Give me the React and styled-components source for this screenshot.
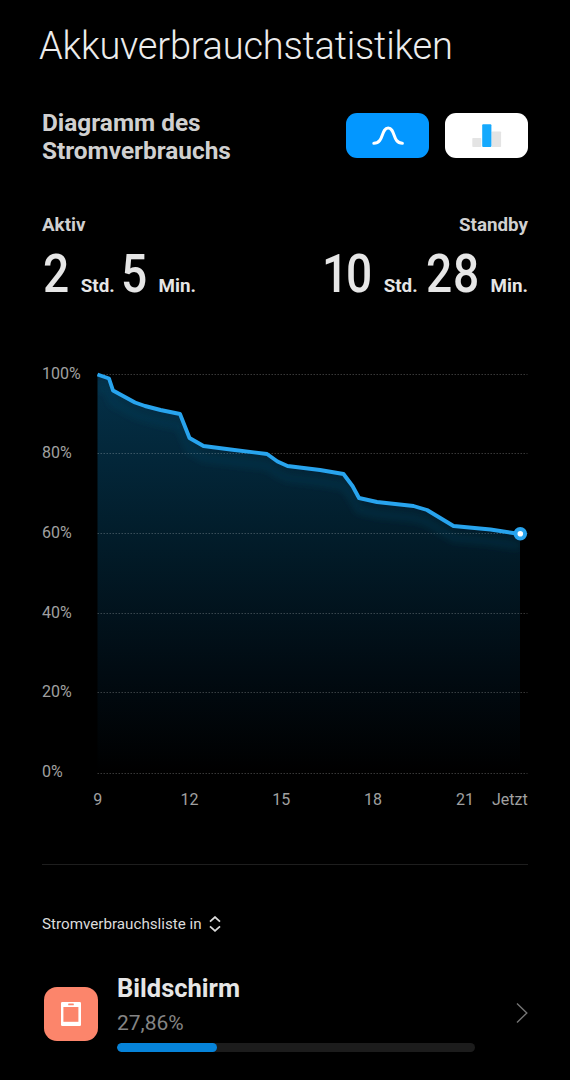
import React from 'react'
import styled, {createGlobalStyle} from 'styled-components'

const points=[
    [0, 0.5], [11.5, 4.5], [15.5, 16.5], [37.5, 28.5], [47.5, 32], [63, 36], [82.5, 40],
    [92, 64], [106, 72], [133, 75.5], [169.5, 80], [180, 87.5], [190, 92], [222.5, 96], [246, 100],
    [255, 112], [261.5, 124], [279.5, 128], [316, 132], [329.5, 136], [356, 152], [393, 155.5], [422.5, 160]
]

const percentLabels=[100, 80, 60, 40, 20, 0]
const gridRows=[0, 79, 159, 239, 318, 399]
const hourLabels=[9, 12, 15, 18, 21]

const BatteryChart = () => {
    const line='M'+points.map(p=>p.join(' ')).join(' L')
    const area=line+' V398 H0 Z'
    return (
        <ChartSvg viewBox='0 0 486 450'>
            <defs>
                <linearGradient id='fill' x1='0' y1='0' x2='0' y2='398' gradientUnits='userSpaceOnUse'>
                    <stop offset='0' stopColor='#043149' />
                    <stop offset='0.4' stopColor='#021d2b' />
                    <stop offset='0.75' stopColor='#010b12' />
                    <stop offset='1' stopColor='#000000' />
                </linearGradient>
                <filter id='glow' x='-10%' y='-20%' width='120%' height='150%'>
                    <feGaussianBlur stdDeviation='3.5' />
                </filter>
                <clipPath id='under'>
                    <path d={area} />
                </clipPath>
            </defs>
            {percentLabels.map((value, i)=>(
                <AxisText key={value} x='0' y={14.7+i*79.6}>{value}%</AxisText>
            ))}
            <g transform='translate(55.5 10)'>
                <path d={area} fill='url(#fill)' />
                <g clipPath='url(#under)'>
                    <path d={line} transform='translate(0 12)' fill='none' stroke='#0b4560' strokeOpacity='0.32' strokeWidth='7' filter='url(#glow)' />
                </g>
                {gridRows.map(y=>(
                    <GridLine key={y} x1='0' x2='430' y1={y+0.5} y2={y+0.5} />
                ))}
                <path d={line} fill='none' stroke='#28a4ee' strokeWidth='3.9' strokeLinejoin='round' />
                <circle cx='422.8' cy='159.8' r='4.8' fill='#fff' stroke='#28a4ee' strokeWidth='4' />
            </g>
            {hourLabels.map((hour, i)=>(
                <AxisText key={hour} x={55.7+i*91.8} y='441' textAnchor='middle'>{hour}</AxisText>
            ))}
            <AxisText x='485.7' y='441' textAnchor='end'>Jetzt</AxisText>
        </ChartSvg>
    )
}

// every digit sits in its own narrow cell
const Digits = ({value}) => {
    return (
        <DigitGroup $pair={value.length>1}>
            {value.split('').map((digit, i)=>(
                <Digit key={i} $slim={digit==='1'}><span>{digit}</span></Digit>
            ))}
        </DigitGroup>
    )
}

const Duration = ({label, hours, minutes, right}) => {
    return (
        <DurationBlock $right={right}>
            <DurationLabel>{label}</DurationLabel>
            <DurationValue>
                <Digits value={hours} />
                <Unit>Std.</Unit>
                <Digits value={minutes} />
                <Unit>Min.</Unit>
            </DurationValue>
        </DurationBlock>
    )
}

const UsageItem = ({name, percent}) => {
    return (
        <Item>
            <AppIcon>
                <svg width='20' height='24' viewBox='0 0 20 24'>
                    <rect width='20' height='24' rx='1.2' fill='#fff' />
                    <rect x='2.4' y='5' width='15' height='14.8' fill='#fc856b' />
                    <rect x='7.2' y='1.6' width='5.6' height='1.7' rx='0.5' fill='#fc856b' />
                </svg>
            </AppIcon>
            <ItemBody>
                <ItemName>{name}</ItemName>
                <ItemPercent>{percent.toFixed(2).replace('.', ',')}%</ItemPercent>
                <Track>
                    <Bar style={{width: `${percent}%`}} />
                </Track>
            </ItemBody>
            <Chevron width='12' height='22' viewBox='0 0 12 22'>
                <path d='M1 1.5 L10.8 11 L1 20.5' fill='none' stroke='#757575' strokeWidth='1.4' />
            </Chevron>
        </Item>
    )
}

const App = () => {
    return (
        <>
            <GlobalStyle />
            <Page>
                <Title>Akkuverbrauchstatistiken</Title>
                <Header>
                    <Heading>Diagramm des Stromverbrauchs</Heading>
                    <Toggles>
                        <Toggle $active>
                            <svg width='32' height='20' viewBox='0 0 32 20'>
                                <path d='M1.8 17.2 C12.2 17.2 8.8 2 16.2 2 C23.6 2 20.2 17.2 30.4 17.2' fill='none' stroke='#fff' strokeWidth='3' strokeLinecap='round' />
                            </svg>
                        </Toggle>
                        <Toggle>
                            <svg width='30' height='24' viewBox='0 0 30 24'>
                                <rect x='0.3' y='14' width='9' height='9' rx='0.8' fill='#e4e4e4' />
                                <rect x='19.6' y='7.4' width='9.5' height='15.6' rx='0.8' fill='#e4e4e4' />
                                <rect x='10.2' y='0.3' width='9.2' height='22.8' rx='1' fill='#15a9fd' />
                            </svg>
                        </Toggle>
                    </Toggles>
                </Header>
                <Durations>
                    <Duration label='Aktiv' hours='2' minutes='5' />
                    <Duration label='Standby' hours='10' minutes='28' right />
                </Durations>
                <BatteryChart />
                <Divider />
                <ListTitle>
                    Stromverbrauchsliste in
                    <svg width='12' height='16' viewBox='0 0 12 16'>
                        <path d='M1 5.6 L6 1.1 L11 5.6 M1 10.3 L6 14.8 L11 10.3' fill='none' stroke='#dcdcdc' strokeWidth='1.8' />
                    </svg>
                </ListTitle>
                <UsageItem name='Bildschirm' percent={27.86} />
            </Page>
        </>
    )
}

export default App


const GlobalStyle=createGlobalStyle`
* {
    box-sizing: border-box;
}
body {
    margin: 0;
    background: #000;
    font-family: Roboto, sans-serif;
    overflow: hidden;
}`;

const Page=styled.div`
width: 570px;
height: 1080px;
padding: 0 42px;
overflow: hidden;
color: #e6e6e6;
background: #000;`;

const Title=styled.h1`
margin: 0 0 0 -3px;
padding-top: 21px;
color: #ececec;
font-size: 38px;
font-weight: 300;
line-height: 50px;
letter-spacing: -0.21px;
white-space: nowrap;
`;

const Header=styled.div`
display: flex;
justify-content: space-between;
margin-top: 37px;
height: 57px;`;

const Heading=styled.h2`
margin: 0;
width: 200px;
padding-top: 0.5px;
color: #d0d0d0;
font-size: 24.4px;
font-weight: 700;
line-height: 28.5px;
`;

const Toggles=styled.div`
display: flex;
gap: 16px;
padding-top: 5px;`;

const Toggle=styled.button`
display: flex;
align-items: center;
justify-content: center;
width: 83px;
height: 45px;
padding: 0;
border: none;
border-radius: 11px;
background: ${({$active}) => ($active ? '#0397ff' : '#fff')};
`;

const Durations=styled.div`
display: flex;
justify-content: space-between;
margin-top: 49px;
height: 150px;`;

const DurationBlock=styled.div`
display: flex;
flex-direction: column;
align-items: ${({$right}) => ($right ? 'flex-end' : 'flex-start')};
`;

const DurationLabel=styled.div`
color: #d0d0d0;
font-size: 18.8px;
font-weight: 700;
line-height: 22px;
`;

const DurationValue=styled.div`
display: flex;
align-items: baseline;
margin-top: 8px;
line-height: 60px;`;

const DigitGroup=styled.span`
display: flex;
align-items: baseline;
margin-left: ${({$pair}) => ($pair ? 3.5 : 1.3)}px;
`;

const Digit=styled.span`
width: ${({$slim}) => ($slim ? 24 : 27)}px;
font-size: 53px;
font-weight: 500;

span {
    display: inline-block;
    transform: scaleX(0.87);
    transform-origin: left;
}
`;

const Unit=styled.span`
margin-left: 10.5px;
font-size: 18.8px;
font-weight: 700;

&:not(:last-child) {
    margin-right: 5px;
}
`;

const ChartSvg=styled.svg`
display: block;
width: 486px;
height: 450px;
`;

const AxisText=styled.text`
fill: #a0a0a0;
font-size: 16px;
`;

const GridLine=styled.line`
stroke: #fff;
stroke-opacity: 0.22;
stroke-width: 1;
stroke-dasharray: 1.5 1.5;
`;

const Divider=styled.div`
height: 1px;
margin-top: 50px;
background: #1e1e1e;`;

const ListTitle=styled.div`
display: flex;
align-items: center;
gap: 7px;
margin-top: 49px;
color: #dcdcdc;
font-size: 15.2px;
line-height: 20px;
`;

const Item=styled.div`
display: flex;
align-items: center;
margin-top: 40px;
padding-left: 2px;
height: 79px;`;

const AppIcon=styled.div`
display: flex;
align-items: center;
justify-content: center;
width: 54px;
height: 54px;
border-radius: 13px;
background: #fc856b;
`;

const ItemBody=styled.div`
width: 358px;
margin-left: 19px;
margin-bottom: 2px;
`;

const ItemName=styled.div`
font-size: 25.5px;
font-weight: 700;
line-height: 29px;
`;

const ItemPercent=styled.div`
margin-top: 7px;
color: #848484;
font-size: 21px;
line-height: 26px;
`;

const Track=styled.div`
height: 9px;
margin-top: 7px;
border-radius: 5px;
background: #1c1c1c;
overflow: hidden;
`;

const Bar=styled.div`
height: 100%;
border-radius: 5px;
background: #0683d9;
`;

const Chevron=styled.svg`
margin-left: auto;
margin-bottom: 2px;
`;
